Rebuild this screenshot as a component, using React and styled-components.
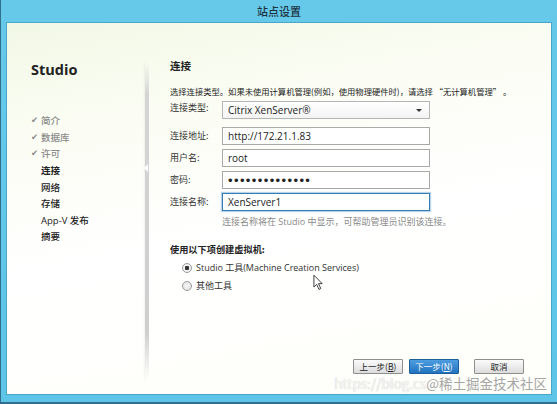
import styled, { createGlobalStyle } from 'styled-components';

const GlobalStyle = createGlobalStyle`
    * { box-sizing: border-box; }
    html, body {
        margin: 0;
        padding: 0;
        background: #62c8ea;
    }
    body {
        font-family: "Open Sans", "Noto Sans CJK SC", sans-serif;
    }
`;

const steps = [
    { label: '简介', state: 'done' },
    { label: '数据库', state: 'done' },
    { label: '许可', state: 'done' },
    { label: '连接', state: 'current' },
    { label: '网络', state: 'todo' },
    { label: '存储', state: 'todo' },
    { label: 'App-V 发布', state: 'todo' },
    { label: '摘要', state: 'todo' },
];

export default function App() {
    return (
        <>
            <GlobalStyle />
            <Window>
                <TitleBar>站点设置</TitleBar>
                <Body>
                    <Sidebar>
                        <Brand>Studio</Brand>
                        <StepList>
                            {steps.map((s) =>
                                <Step key={s.label} state={s.state}>
                                    <Check>{s.state === 'done' ? '✔' : ''}</Check>
                                    {s.label}
                                </Step>)}
                        </StepList>
                    </Sidebar>
                    <Divider />
                    <Main>
                        <Heading>连接</Heading>
                        <Description>选择连接类型。如果未使用计算机管理(例如，使用物理硬件时)，请选择 “无计算机管理” 。</Description>
                        <Row>
                            <Label>连接类型:</Label>
                            <Select>
                                <span>Citrix XenServer®</span>
                                <Caret />
                            </Select>
                        </Row>
                        <FieldGroup>
                            <Row>
                                <Label>连接地址:</Label>
                                <Input readOnly value="http://172.21.1.83" />
                            </Row>
                            <Row>
                                <Label>用户名:</Label>
                                <Input readOnly value="root" />
                            </Row>
                            <Row>
                                <Label>密码:</Label>
                                <Input readOnly type="password" value="passwordpasswo" />
                            </Row>
                            <Row>
                                <Label>连接名称:</Label>
                                <Input readOnly focused value="XenServer1" />
                            </Row>
                        </FieldGroup>
                        <Hint>连接名称将在 Studio 中显示，可帮助管理员识别该连接。</Hint>
                        <SectionTitle>使用以下项创建虚拟机:</SectionTitle>
                        <RadioList>
                            <RadioRow>
                                <Radio checked />
                                Studio 工具(Machine Creation Services)
                            </RadioRow>
                            <RadioRow>
                                <Radio />
                                其他工具
                            </RadioRow>
                        </RadioList>
                        <Buttons>
                            <Button>上一步(<u>B</u>)</Button>
                            <Button primary>下一步(<u>N</u>)</Button>
                            <Button cancel>取消</Button>
                        </Buttons>
                    </Main>
                    <Cursor viewBox="0 0 12 18">
                        <path d="M1 1 L1 14 L4 11 L6.5 16.5 L8.5 15.6 L6 10.2 L10 10.2 Z" fill="#fff" stroke="#333" strokeWidth="1" strokeLinejoin="round" />
                    </Cursor>
                    <Watermark><Faint>https://blog.cs</Faint>@稀土掘金技术社区</Watermark>
                </Body>
            </Window>
        </>
    );
}

const Window = styled.div`
    width: 557px;
    height: 404px;
    display: flex;
    flex-direction: column;
    background: linear-gradient(to bottom, #66c9ea, #5ec5e8);
    border-left: 1px solid #2f6f8c;
    border-bottom: 2px solid #2f6f8c;
    padding: 0 5px 7px 5px;
`;

const TitleBar = styled.div`
    height: 22px;
    flex: none;
    display: flex;
    align-items: center;
    justify-content: center;
    font-family: "Noto Sans CJK SC", sans-serif;
    font-size: 11px;
    font-weight: 500;
    color: #1c3140;
`;

const Body = styled.div`
    position: relative;
    flex: 1;
    display: flex;
    background: linear-gradient(170deg, #f2f8e6 0%, #fbfdf4 25%, #ffffff 55%, #fefef9 100%);
    border: 1px solid #4aa6c8;
    overflow: hidden;
`;

const Sidebar = styled.div`
    width: 138px;
    flex: none;
    padding: 38px 0 0 24px;
`;

const Brand = styled.div`
    font-family: "Open Sans", sans-serif;
    font-size: 14.5px;
    font-weight: 700;
    line-height: 18px;
    color: #222;
`;

const StepList = styled.ul`
    list-style: none;
    margin: 33px 0 0;
    padding: 0;
`;

const Step = styled.li`
    height: 16.6px;
    display: flex;
    align-items: center;
    font-family: "Open Sans", "Noto Sans CJK SC", sans-serif;
    font-size: 9.5px;
    font-weight: ${props => props.state === 'current' ? 700 : 500};
    color: ${props => props.state === 'done' ? '#8a8a8a' : '#222'};
`;

const Check = styled.span`
    width: 10px;
    font-family: "DejaVu Sans", sans-serif;
    font-size: 8.5px;
    color: #8a8a8a;
`;

const Divider = styled.div`
    position: relative;
    width: 4px;
    flex: none;
    margin: 40px 0 14px;
    background: linear-gradient(to bottom, rgba(200,200,200,0) 0%, #d4d4d4 10%, #cfcfcf 85%, rgba(200,200,200,0) 100%);
    box-shadow: -1px 0 2px rgba(0,0,0,0.05);

    &::after {
        content: '';
        position: absolute;
        top: 101px;
        left: -1px;
        border-top: 4px solid transparent;
        border-bottom: 4px solid transparent;
        border-right: 4px solid #ffffff;
    }
`;

const Main = styled.div`
    flex: 1;
    min-width: 0;
    display: flex;
    flex-direction: column;
    padding: 36px 27px 20px 21px;
    font-family: "Open Sans", "Noto Sans CJK SC", sans-serif;
    font-size: 9.5px;
    color: #222;
`;

const Heading = styled.div`
    font-family: "Noto Sans CJK SC", sans-serif;
    font-size: 10.5px;
    font-weight: 700;
    line-height: 14px;
`;

const Description = styled.div`
    margin-top: 11px;
    line-height: 14px;
    font-family: "Noto Sans CJK SC", sans-serif;
    font-size: 8.3px;
    white-space: nowrap;
`;

const FieldGroup = styled.div`
    margin-top: 8px;
    display: flex;
    flex-direction: column;
    gap: 4px;
`;

const Row = styled.div`
    display: flex;
    align-items: center;
`;

const Label = styled.div`
    width: 52px;
    flex: none;
    font-family: "Noto Sans CJK SC", sans-serif;
    font-size: 9px;
    color: #333;
    padding-bottom: 2px;
`;

const fieldBase = `
    width: 208px;
    height: 18px;
    border: 1px solid #a9a9a9;
    background: #fff;
    padding: 0 5px;
    font-family: "Open Sans", sans-serif;
    font-size: 10px;
    color: #222;
`;

const Select = styled.div`
    ${fieldBase}
    display: flex;
    align-items: center;
    justify-content: space-between;
    margin-top: 3px;
    background: linear-gradient(to bottom, #ffffff, #f3f3f3);
    border-color: #b5b5b5;
`;

const Caret = styled.span`
    width: 0;
    height: 0;
    margin-right: 2px;
    border-left: 3px solid transparent;
    border-right: 3px solid transparent;
    border-top: 3px solid #333;
`;

const Input = styled.input`
    ${fieldBase}
    outline: none;
    border-color: ${props => props.focused ? '#3a7db5' : '#a9a9a9'};
    box-shadow: ${props => props.focused ? '0 0 1px 1px rgba(90,160,215,0.45)' : 'none'};
    font-family: ${props => props.type === 'password' ? '"Liberation Sans", sans-serif' : '"Open Sans", sans-serif'};
    font-size: ${props => props.type === 'password' ? '13px' : '10px'};
    letter-spacing: ${props => props.type === 'password' ? '1.4px' : 'normal'};
`;

const Hint = styled.div`
    margin: 4px 0 0 52px;
    line-height: 13px;
    font-family: "Open Sans", "Noto Sans CJK SC", sans-serif;
    font-size: 9px;
    color: #8a8a8a;
    white-space: nowrap;
`;

const SectionTitle = styled.div`
    margin-top: 14px;
    line-height: 14px;
    font-family: "Noto Sans CJK SC", sans-serif;
    font-size: 9.2px;
    font-weight: 700;
`;

const RadioList = styled.div`
    margin: 5px 0 0 12px;
    display: flex;
    flex-direction: column;
    gap: 4px;
`;

const RadioRow = styled.label`
    display: flex;
    align-items: center;
    gap: 4px;
    line-height: 14px;
    font-size: 9px;
    color: #333;
`;

const Radio = styled.span`
    width: 10px;
    height: 10px;
    border-radius: 50%;
    border: 1px solid #9a9a9a;
    background: radial-gradient(circle, ${props => props.checked ? '#333 0 2px, #f2f2f2 2.5px' : '#f6f6f6 0, #e0e0e0 100%'});
`;

const Buttons = styled.div`
    margin-top: auto;
    display: flex;
    justify-content: flex-end;
    gap: 6px;
`;

const Button = styled.button`
    width: 50px;
    height: 15px;
    padding: 0;
    border-radius: 1px;
    margin-left: ${props => props.cancel ? '9px' : '0'};
    border: 1px solid ${props => props.primary ? '#1d5f9a' : '#8e8e8e'};
    background: ${props => props.primary
        ? 'linear-gradient(to bottom, #4d9de0, #2374c0)'
        : 'linear-gradient(to bottom, #fbfbfb, #dcdcdc)'};
    color: ${props => props.primary ? '#fff' : '#222'};
    font-family: "Noto Sans CJK SC", sans-serif;
    font-size: 8.5px;
    line-height: 13px;

    u { text-decoration: underline; }
`;

const Cursor = styled.svg`
    position: absolute;
    left: 306px;
    top: 251px;
    width: 11px;
    height: 17px;
`;

const Watermark = styled.div`
    position: absolute;
    right: 4px;
    bottom: 1px;
    font-family: "Noto Sans CJK SC", sans-serif;
    font-size: 13.5px;
    color: #a6a6a6;
    white-space: nowrap;
`;

const Faint = styled.span`
    color: #f6f6f6;
    text-shadow: 0 0 1px #bdbdbd;
`;
